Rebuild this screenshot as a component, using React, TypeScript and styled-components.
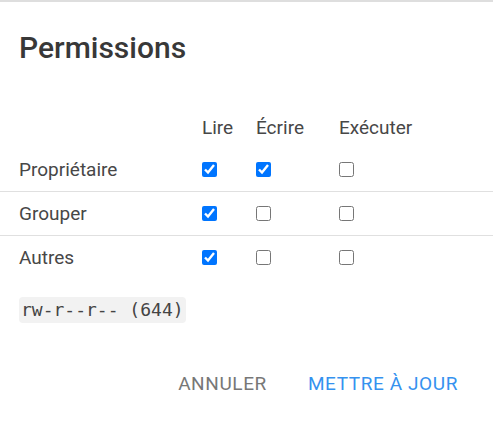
import styled, { createGlobalStyle } from "styled-components";

const Global = createGlobalStyle`
  body {
    margin: 0;
    background: #fff;
    font-family: Roboto, "Noto Sans", sans-serif;
  }
`;

const Dialog = styled.div`
  width: 493px;
  height: 432px;
  box-sizing: border-box;
  border-top: 2px solid #dedede;
  background: #fff;
  display: flex;
  flex-direction: column;
`;

const Title = styled.h2`
  margin: 0;
  padding: 28px 19px 0;
  font-size: 30px;
  line-height: 36px;
  font-weight: 500;
  color: #383838;
`;

const Table = styled.div`
  margin-top: 40px;
  display: grid;
  grid-template-columns: 202px 54px 83px 1fr;
`;

const Cell = styled.div<{ $head?: boolean; $line?: boolean }>`
  height: ${(p) => (p.$head ? 42 : 43)}px;
  display: flex;
  align-items: center;
  font-size: 19px;
  color: #474747;
  border-top: ${(p) => (p.$line ? "1px solid #e0e0e0" : "none")};
`;

const Label = styled(Cell)`
  padding-left: 19px;
`;

const Box = styled.input`
  margin: 0;
  width: 15px;
  height: 15px;
`;

const Code = styled.code`
  align-self: flex-start;
  margin: 18px 0 0 19px;
  padding: 3px 2px;
  background: #f2f2f2;
  border-radius: 4px;
  font-family: "DejaVu Sans Mono", monospace;
  font-size: 18px;
  line-height: 20px;
  color: #444;
`;

const Actions = styled.div`
  display: flex;
  justify-content: flex-end;
  gap: 41px;
  padding: 50px 35px 0 0;
`;

const Button = styled.button<{ $primary?: boolean }>`
  border: none;
  background: none;
  padding: 0;
  font-family: Roboto, sans-serif;
  font-size: 19px;
  line-height: 22px;
  font-weight: 400;
  letter-spacing: 0.6px;
  text-transform: uppercase;
  color: ${(p) => (p.$primary ? "#3592ef" : "#777")};
`;

const rows = [
  { name: "Propriétaire", perms: [true, true, false] },
  { name: "Grouper", perms: [true, false, false] },
  { name: "Autres", perms: [true, false, false] },
];

export default function App() {
  return (
    <Dialog>
      <Global />
      <Title>Permissions</Title>
      <Table>
        <Cell $head />
        <Cell $head>Lire</Cell>
        <Cell $head>Écrire</Cell>
        <Cell $head>Exécuter</Cell>
        {rows.map((r, i) => (
          <>
            <Label key={r.name} $line={i > 0}>{r.name}</Label>
            {r.perms.map((c, j) => (
              <Cell key={j} $line={i > 0}>
                <Box type="checkbox" defaultChecked={c} />
              </Cell>
            ))}
          </>
        ))}
      </Table>
      <Code>rw-r--r-- (644)</Code>
      <Actions>
        <Button>Annuler</Button>
        <Button $primary>Mettre à jour</Button>
      </Actions>
    </Dialog>
  );
}
